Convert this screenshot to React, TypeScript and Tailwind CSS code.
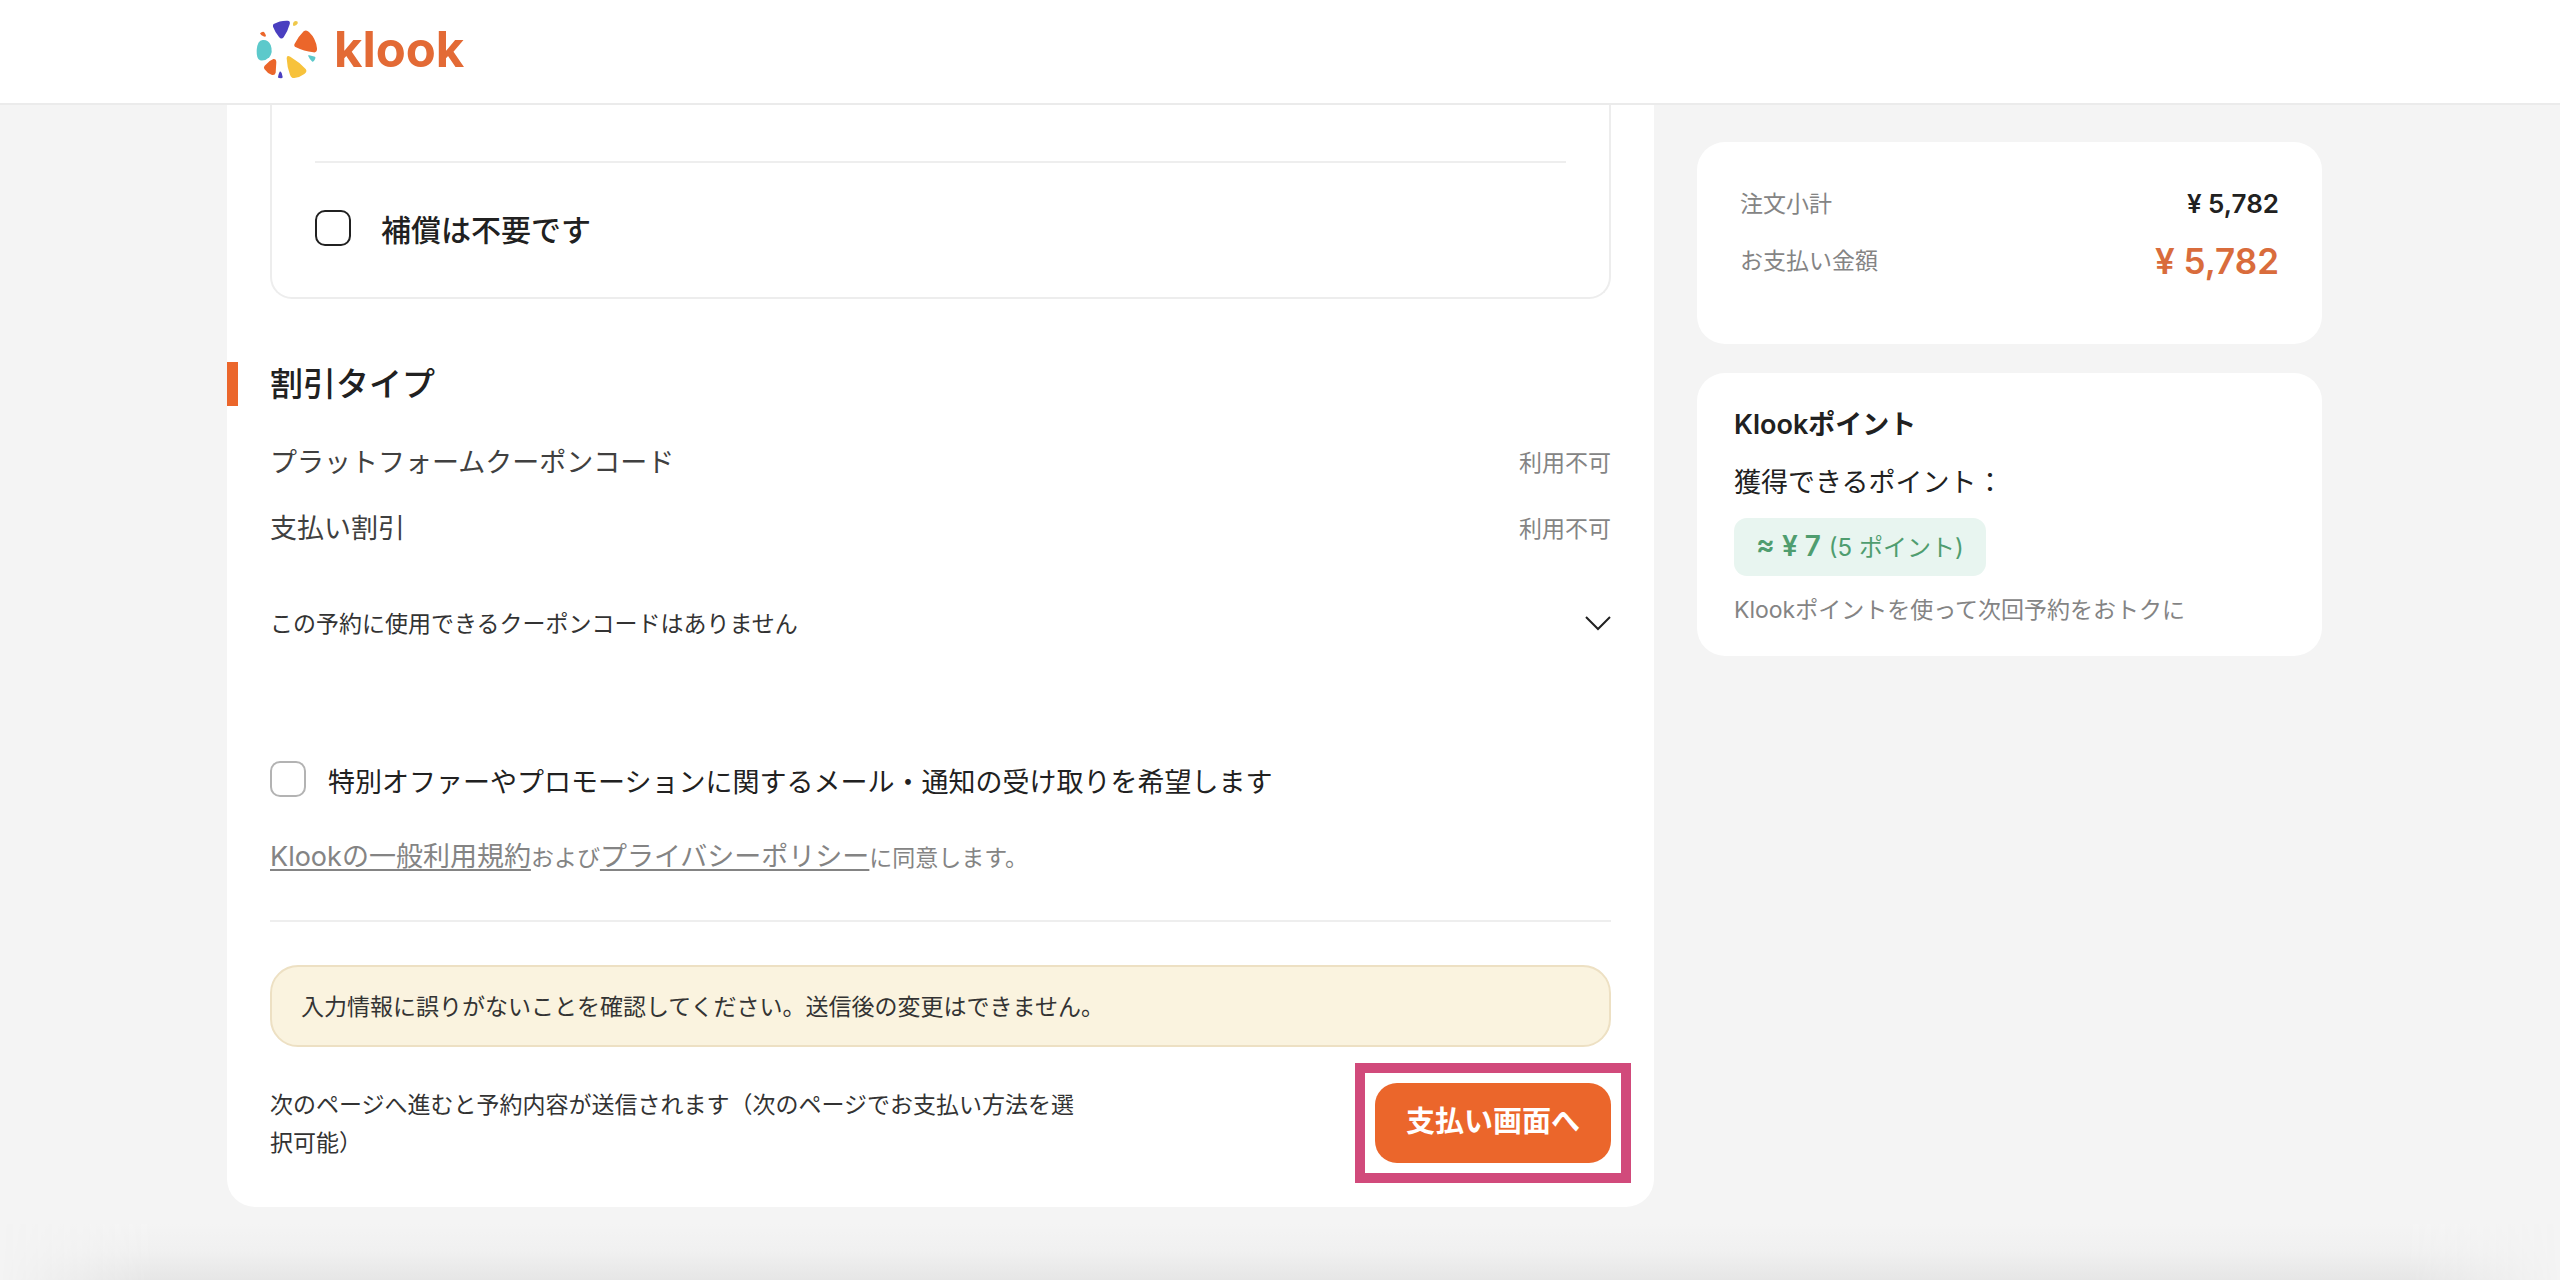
import React from "react";

function KlookMark() {
  return (
    <svg viewBox="0 0 186 180" className="h-[60px] w-[62px]" aria-hidden="true">
      <path fill="#4a3fc0" d="M53 12 Q72 1 95 2 Q104 3 101 13 Q95 35 83 52 Q76 60 69 51 Q58 38 51 20 Q50 14 53 12Z" />
      <path fill="#eb662b" d="M116 71 Q126 51 143 34 Q151 28 159 36 Q180 56 183 85 Q184 99 172 97 Q143 94 120 82 Q112 78 116 71Z" />
      <path fill="#f7c23c" d="M92 115 Q92 104 103 110 Q130 126 149 147 Q155 155 145 162 Q132 172 115 174 Q106 175 102 164 Q93 141 92 115Z" />
      <path fill="#5cc9cb" d="M2 90 Q4 62 20 60 Q36 58 44 75 Q52 96 40 112 Q28 124 12 121 Q1 117 2 90Z" />
      <path fill="#eb662b" d="M26 137 Q38 122 52 117 Q61 116 61 127 L59 158 Q57 167 48 165 Q33 159 25 147 Q22 141 26 137Z" />
      <path fill="#4a3fc0" d="M66 171 Q68 160 71 155 Q74 154 77 159 L80 171 Q80 175 75 175 L69 174 Q66 174 66 171Z" />
      <path fill="#eb662b" d="M12 40 Q18 34 24 36 Q29 42 30 48 Q28 52 22 49 Q14 46 12 40Z" />
      <path fill="#efc84a" d="M113 6 Q119 1 125 5 Q127 10 121 15 L114 18 Q110 18 111 11Z" />
      <path fill="#5cc9cb" d="M157 109 Q154 105 160 106 L177 110 Q180 112 177 118 Q174 126 169 125 Q161 119 157 109Z" />
    </svg>
  );
}

function Header() {
  return (
    <header className="h-[105px] border-b-2 border-[#ebebeb] bg-white pl-[256px] pr-8">
      <a href="#" className="flex h-[99px] w-fit items-center gap-[16px]">
        <KlookMark />
        <span className="text-[49px] leading-[60px] font-bold text-[#e36a35]">klook</span>
      </a>
    </header>
  );
}

function Checkbox({ id, className }: { id: string; className: string }) {
  return (
    <input
      id={id}
      type="checkbox"
      className={`size-[36px] shrink-0 appearance-none rounded-[10px] border-2 bg-white checked:bg-[#eb662b] ${className}`}
    />
  );
}

function DiscountRow({ label }: { label: string }) {
  return (
    <li className="flex h-[66px] items-center justify-between">
      <span className="text-[27px] leading-[40px] text-[#404040]">{label}</span>
      <span className="text-[23px] leading-[36px] text-[#848484]">利用不可</span>
    </li>
  );
}

function BookingForm() {
  return (
    <main className="min-w-0 flex-1 rounded-b-[28px] bg-white px-[43px] pb-[44px]">
      <section className="rounded-b-[22px] border-x-2 border-b-2 border-[#ededed] px-[43px] pt-[56px]">
        <hr className="border-t-2 border-[#eeeeee]" />
        <div className="flex h-[134px] items-center gap-[30px] pb-[4px]">
          <Checkbox id="no-cover" className="border-[#212121]" />
          <label htmlFor="no-cover" className="pt-[4px] text-[30px] leading-[44px] font-medium text-[#212121]">
            補償は不要です
          </label>
        </div>
      </section>

      <section className="mt-[63px]">
        <h2 className="-ml-[43px] flex h-[44px] items-center border-l-[11px] border-[#eb662b] pl-[32px] text-[33px] leading-[44px] font-medium text-[#212121]">
          割引タイプ
        </h2>
        <ul className="mt-[24px]">
          <DiscountRow label="プラットフォームクーポンコード" />
          <DiscountRow label="支払い割引" />
        </ul>
        <button type="button" className="mt-[29px] flex h-[66px] w-full items-center justify-between text-left">
          <span className="text-[23px] leading-[36px] text-[#333333]">この予約に使用できるクーポンコードはありません</span>
          <svg viewBox="0 0 26 16" className="h-[16px] w-[26px]" fill="none" stroke="#212121" strokeWidth="2" aria-hidden="true">
            <path d="M1 1 L13 13 L25 1" />
          </svg>
        </button>
      </section>

      <section className="mt-[89px]">
        <div className="flex h-[66px] items-center gap-[22px]">
          <Checkbox id="newsletter" className="border-[#b3b3b3]" />
          <label htmlFor="newsletter" className="pt-[8px] text-[27px] leading-[40px] text-[#212121]">
            特別オファーやプロモーションに関するメール・通知の受け取りを希望します
          </label>
        </div>
        <p className="mt-[23px] text-[23px] leading-[44px] text-[#848484]">
          <a href="#" className="text-[27px] underline decoration-2 underline-offset-[3px]">Klookの一般利用規約</a>
          および
          <a href="#" className="text-[27px] underline decoration-2 underline-offset-[3px]">プライバシーポリシー</a>
          に同意します。
        </p>
        <hr className="mt-[40px] border-t-2 border-[#eeeeee]" />
      </section>

      <p className="mt-[43px] rounded-[28px] border-2 border-[#ede0c3] bg-[#faf3df] px-[29px] pt-[21px] pb-[19px] text-[23px] leading-[38px] text-[#333333]">
        入力情報に誤りがないことを確認してください。送信後の変更はできません。
      </p>
      <div className="mt-[36px] flex items-start justify-between">
        <p className="max-w-[815px] pt-[3px] text-[23px] leading-[38px] text-[#333333]">
          次のページへ進むと予約内容が送信されます（次のページでお支払い方法を選択可能）
        </p>
        <div className="relative">
          <button type="button" className="h-[80px] rounded-[22px] bg-[#eb662b] px-[31px] pb-[2px] text-[29px] leading-[44px] font-semibold text-white">
            支払い画面へ
          </button>
          <div className="pointer-events-none absolute -inset-[20px] border-[10px] border-[#d14a7b]" />
        </div>
      </div>
    </main>
  );
}

function Summary() {
  return (
    <aside className="flex w-[625px] shrink-0 flex-col gap-[29px] pt-[37px]">
      <dl className="rounded-[28px] bg-white px-[43px] pt-[33px] pb-[55px]">
        <div className="flex h-[58px] items-center justify-between">
          <dt className="text-[23px] leading-[36px] text-[#848484]">注文小計</dt>
          <dd className="text-[26px] leading-[36px] font-semibold text-[#212121]">¥ 5,782</dd>
        </div>
        <div className="flex h-[56px] items-center justify-between">
          <dt className="text-[23px] leading-[36px] text-[#848484]">お支払い金額</dt>
          <dd className="text-[35px] leading-[48px] font-semibold text-[#d96c3c]">¥ 5,782</dd>
        </div>
      </dl>
      <section className="rounded-[28px] bg-white px-[37px] pt-[32px] pb-[28px]">
        <h2 className="text-[27px] leading-[40px] font-semibold text-[#212121]">Klookポイント</h2>
        <p className="mt-[18px] text-[27px] leading-[40px] text-[#212121]">獲得できるポイント：</p>
        <p className="mt-[15px] flex w-fit items-baseline gap-[8px] rounded-[13px] bg-[#e8f5f0] px-[22px] py-[8px] text-[24px] leading-[40px] text-[#4f9d6f]">
          <strong className="text-[28px] font-semibold">≈ ¥ 7</strong>
          <span>(5 ポイント)</span>
        </p>
        <p className="mt-[16px] text-[23px] leading-[36px] text-[#848484]">Klookポイントを使って次回予約をおトクに</p>
      </section>
    </aside>
  );
}

export default function App() {
  return (
    <div
      lang="ja"
      className="flex min-h-screen flex-col bg-[#f4f4f4] font-['Inter','Noto_Sans_CJK_JP',sans-serif]"
    >
      <Header />
      <div className="flex items-start gap-[43px] pl-[227px] pr-[238px]">
        <BookingForm />
        <Summary />
      </div>
      <div className="mt-auto h-[56px] bg-linear-to-b from-[#f4f4f4] via-[#f0f0f0] to-[#e6e6e6] [mask-image:linear-gradient(to_right,transparent,black_6%,black_94%,transparent)]" />
    </div>
  );
}
